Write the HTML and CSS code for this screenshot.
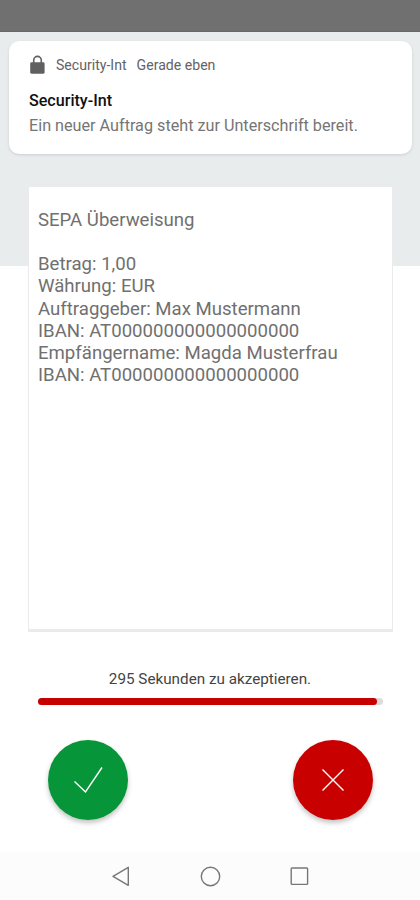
FILE: index.html
```html
<!DOCTYPE html>
<html lang="de">
<head>
    <meta charset="UTF-8">
    <meta name="viewport" content="width=device-width, initial-scale=1.0">
    <title>Security-Int</title>
    <link rel="stylesheet" href="styles.css">
</head>
<body>
    <div class="status-bar"></div>
    <main class="screen">
        <div class="notification">
            <div class="notification-header">
                <svg class="lock" width="16" height="20" viewBox="0 0 16 20">
                    <path d="M4.7 8.5V5.2a3.8 3.8 0 0 1 7.6 0V8.5" fill="none" stroke="#606060" stroke-width="1.6"/>
                    <rect x="1.2" y="7.3" width="14.4" height="11.4" rx="1.4" fill="#606060"/>
                </svg>
                <span class="app-name">Security-Int</span>
                <span class="time">Gerade eben</span>
            </div>
            <div class="notification-title">Security-Int</div>
            <div class="notification-text">Ein neuer Auftrag steht zur Unterschrift bereit.</div>
        </div>

        <div class="order">
            <p>SEPA Überweisung</p>
            <p>
                Betrag: 1,00<br>
                Währung: EUR<br>
                Auftraggeber: Max Mustermann<br>
                IBAN: AT000000000000000000<br>
                Empfängername: Magda Musterfrau<br>
                IBAN: AT000000000000000000
            </p>
        </div>

        <div class="countdown"><span>295 Sekunden zu akzeptieren.</span></div>
        <div class="progress">
            <div class="progress-bar" style="width: 98.3%"></div>
        </div>

        <div class="actions">
            <button class="action accept" aria-label="Akzeptieren">
                <svg width="80" height="80" viewBox="0 0 80 80">
                    <path d="M26.5 41.5L37.5 52L54 27.5"/>
                </svg>
            </button>
            <button class="action reject" aria-label="Ablehnen">
                <svg width="80" height="80" viewBox="0 0 80 80">
                    <path d="M29.5 29.5L50.5 50.5M50.5 29.5L29.5 50.5"/>
                </svg>
            </button>
        </div>
    </main>
    <nav class="nav-bar">
        <svg width="22" height="22" viewBox="0 0 22 22"><path d="M18.3 2.3V20.3L3 11.3Z"/></svg>
        <svg width="22" height="22" viewBox="0 0 22 22"><circle cx="11.5" cy="11.5" r="9.2"/></svg>
        <svg width="22" height="22" viewBox="0 0 22 22"><rect x="3.2" y="3" width="16.4" height="16.4" rx="0.8"/></svg>
    </nav>
</body>
</html>
```

FILE: styles.css
```css
* {
    box-sizing: border-box;
}

body {
    margin: 0;
    height: 900px;
    display: flex;
    flex-direction: column;
    font-family: Roboto, sans-serif;
    background-color: white;
    overflow: hidden;
}

.status-bar {
    height: 32px;
    background-color: #707070;
    border-bottom: 1px solid #686868;
}

.screen {
    flex: 1;
    padding: 9px 9px 0;
    background: linear-gradient(#e8ecec, #e8ecec) no-repeat top / 100% 234px;
}

.notification {
    height: 113px;
    margin-right: -1px;
    padding: 14px 20px 0;
    background-color: white;
    border-radius: 10px;
    box-shadow: 0 1px 3px rgba(0, 0, 0, 0.12);
    white-space: nowrap;
}

.notification-header {
    display: flex;
    align-items: center;
    height: 20px;
    font-size: 14.1px;
    color: #636363;
}

.app-name {
    margin-left: 11px;
}

.time {
    margin-left: 10px;
}

.notification-title {
    margin-top: 14px;
    font-size: 16.1px;
    font-weight: 500;
    line-height: 24px;
    color: #111;
}

.notification-text {
    font-size: 16.2px;
    line-height: 26px;
    color: #757575;
}

.order {
    height: 445px;
    margin: 33px 18px 0 19px;
    padding: 22px 9px;
    background-color: white;
    border: solid #ebebeb;
    border-width: 0 1px 3px;
    font-size: 18.6px;
    line-height: 22.1px;
    color: #707070;
    white-space: nowrap;
}

.order p {
    margin: 0 0 22.3px;
}

.countdown {
    margin-top: 37px;
    text-align: center;
    font-size: 15.25px;
    line-height: 20px;
    color: #444;
}

.progress {
    height: 7px;
    margin: 9px 28px 0 29px;
    border-radius: 4px;
    background-color: #dcdcdc;
}

.progress-bar {
    height: 7px;
    border-radius: 4px;
    background-color: #c70000;
}

.actions {
    display: flex;
    justify-content: space-between;
    margin: 35px 38px 0 39px;
}

.action {
    width: 80px;
    height: 80px;
    padding: 0;
    border: none;
    border-radius: 50%;
    box-shadow: 0 3px 5px rgba(0, 0, 0, 0.24);
}

.action svg {
    display: block;
    fill: none;
    stroke: white;
    stroke-width: 1.4;
}

.accept {
    background-color: #069639;
}

.reject {
    background-color: #c90000;
}

.nav-bar {
    display: flex;
    justify-content: space-between;
    height: 48px;
    padding: 13px 110px 0;
    background-color: #fcfcfc;
}

.nav-bar svg {
    fill: none;
    stroke: #777;
    stroke-width: 1.4;
    stroke-linejoin: round;
}
```
